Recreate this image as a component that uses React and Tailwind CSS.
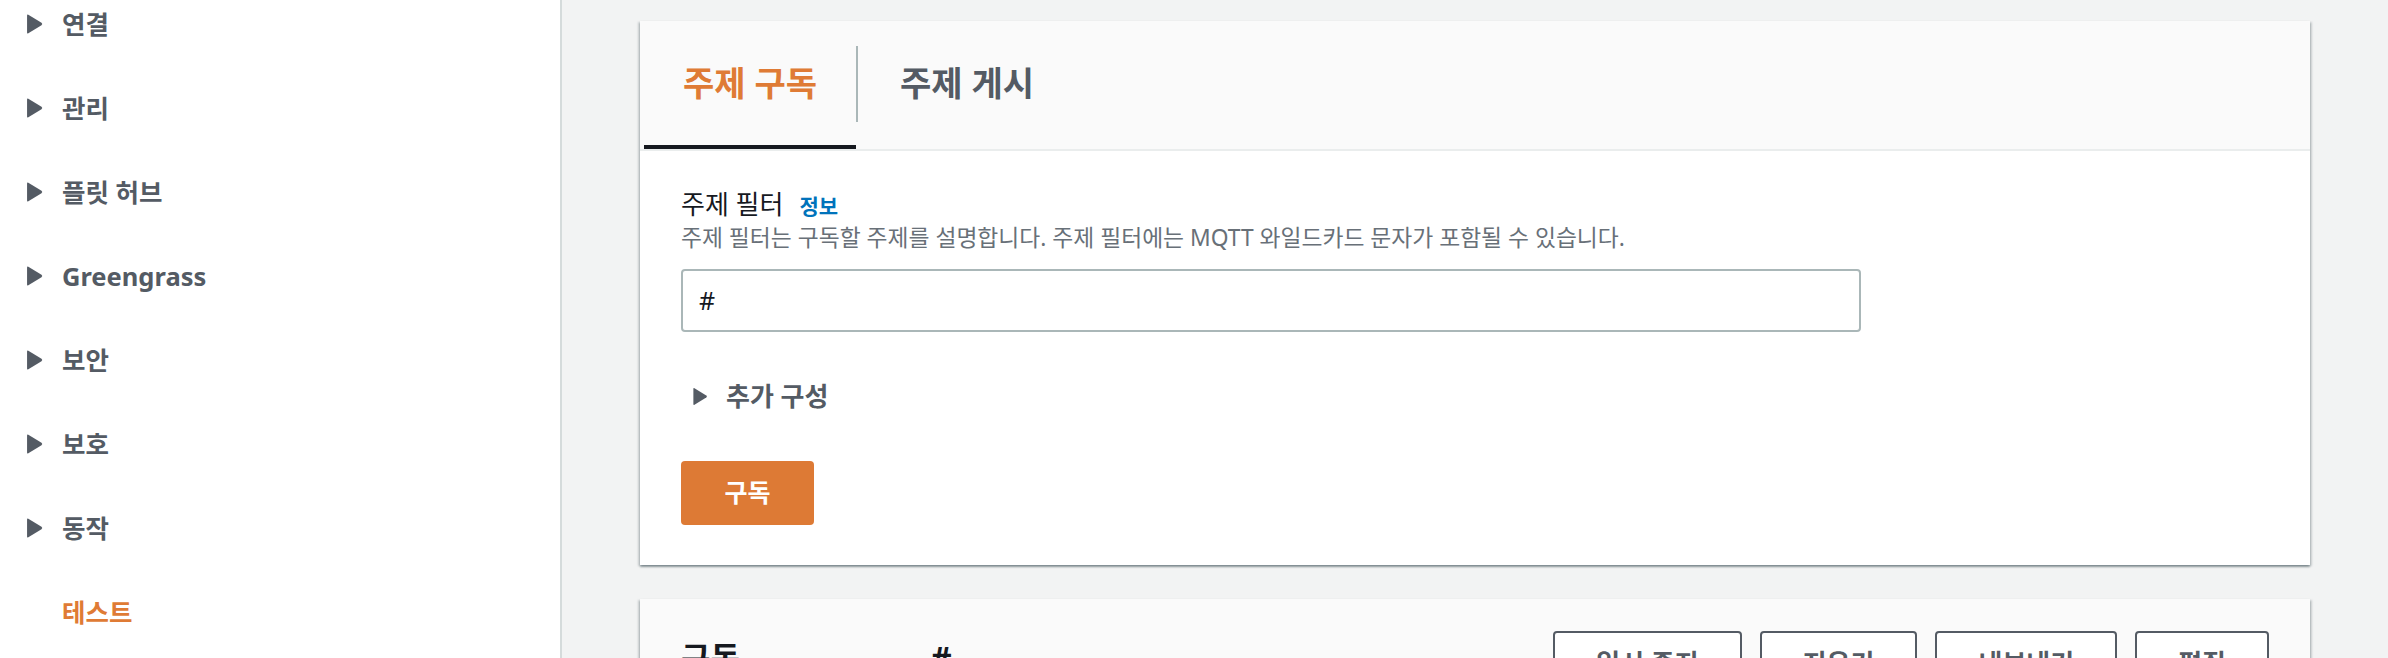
import React from 'react';

const font = { fontFamily: '"Noto Sans", "Noto Sans CJK KR", sans-serif' };

const Caret = ({ className = '' }) => (
  <svg viewBox="0 0 16 20" className={className} fill="currentColor">
    <path d="M2.2 1.2 L14.6 8.9 Q16 10 14.6 11.1 L2.2 18.8 Q1 19.5 1 18 L1 2 Q1 0.5 2.2 1.2 Z" />
  </svg>
);

const navItems = ['연결', '관리', '플릿 허브', 'Greengrass', '보안', '보호', '동작'];

const Sidebar = () => (
  <aside className="w-[562px] shrink-0 bg-white border-r-2 border-[#d5dbdb] h-full">
    <ul className="-mt-[18px]">
      {navItems.map((item) => (
        <li key={item} className="h-[84px] flex items-center pl-[26px] text-[#545b64]">
          <Caret className="w-[17px] h-[22px]" />
          <span className="ml-[19px] text-[25.5px] font-bold leading-[32px]">{item}</span>
        </li>
      ))}
      <li className="h-[84px] flex items-center pl-[62px]">
        <span className="text-[25.5px] font-bold leading-[32px] text-[#df7b35]">테스트</span>
      </li>
    </ul>
  </aside>
);

const cardShadow =
  'shadow-[0_2px_2px_0_rgba(0,28,36,0.35),2px_1px_2px_0_rgba(0,28,36,0.15),-2px_1px_2px_0_rgba(0,28,36,0.15)]';

const SubscribeCard = () => (
  <section className={`bg-white ${cardShadow}`}>
    {/* tabs */}
    <div className="h-[130px] bg-[#fafafa] border-b-2 border-[#eaeded] flex items-stretch pl-[4px]">
      <button className="h-[128px] w-[212px] border-b-4 border-[#16191f] text-[34px] font-semibold text-[#df7b35] leading-[44px]">
        주제 구독
      </button>
      <div className="w-[2px] h-[76px] self-center bg-[#aab7b8] -mt-[2px]" />
      <button className="h-[128px] px-[42px] pb-[4px] text-[34px] font-semibold text-[#545b64] leading-[44px]">
        주제 게시
      </button>
    </div>

    {/* body */}
    <div className="px-[41px] pt-[36px] pb-[40px]">
      <div className="flex items-baseline gap-[16px] leading-[34px]">
        <span className="text-[26px] text-[#16191f]">주제 필터</span>
        <span className="text-[21px] font-bold text-[#0073bb]">정보</span>
      </div>
      <p className="text-[22.8px] leading-[30px] text-[#687078]">
        주제 필터는 구독할 주제를 설명합니다. 주제 필터에는 MQTT 와일드카드 문자가 포함될 수 있습니다.
      </p>
      <div className="mt-[16px] w-[1180px] h-[63px] border-2 border-[#aab7b8] rounded-[4px] flex items-center px-[16px] text-[25px] text-[#16191f]">
        #
      </div>

      <div className="mt-[48px] flex items-center h-[32px] pl-[11px] text-[#545b64]">
        <Caret className="w-[16px] h-[19px]" />
        <span className="ml-[18px] text-[26px] font-semibold leading-[32px]">추가 구성</span>
      </div>

      <button className="mt-[49px] w-[133px] h-[64px] rounded-[4px] bg-[#dd7a35] text-white text-[25px] font-semibold">
        구독
      </button>
    </div>
  </section>
);

const actions = ['일시 중지', '지우기', '내보내기', '편집'];

const MessagesCard = () => (
  <section className={`bg-[#fafafa] ${cardShadow} mt-[34px]`}>
    <div className="flex items-center pl-[41px] pr-[41px] pt-[32px] pb-[32px]">
      <h2 className="w-[250px] text-[32px] font-bold leading-[40px] text-[#16191f] -mt-[10px]">구독</h2>
      <span className="text-[32px] font-bold leading-[40px] text-[#16191f] -mt-[10px]">#</span>
      <div className="ml-auto flex gap-[18px]">
        {actions.map((a) => (
          <button
            key={a}
            className="h-[64px] px-[41px] bg-white border-2 border-[#545b64] rounded-[4px] text-[26px] font-bold text-[#545b64] whitespace-nowrap"
          >
            {a}
          </button>
        ))}
      </div>
    </div>
    <div className="h-[120px] bg-white" />
  </section>
);

export default function App() {
  return (
    <div style={font} className="w-[2388px] h-[658px] overflow-hidden flex bg-[#f2f3f3]">
      <Sidebar />
      <main className="flex-1 px-[78px] pt-[21px]">
        <SubscribeCard />
        <MessagesCard />
      </main>
    </div>
  );
}
